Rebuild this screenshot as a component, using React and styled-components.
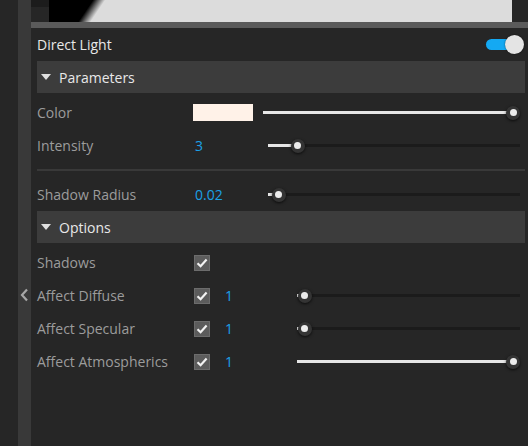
import React from 'react';
import styled, { createGlobalStyle } from 'styled-components';

const GlobalStyle = createGlobalStyle`
  html, body {
    margin: 0;
    padding: 0;
    background: #262626;
    overflow: hidden;
  }
  body {
    font-family: "Open Sans", "Noto Sans", sans-serif;
  }
`;

const Page = styled.div`
  display: grid;
  grid-template-columns: 18px 13px 1fr;
  width: 528px;
  height: 446px;
  background: #262626;
`;

const Gutter = styled.div`
  background: #262626;
`;

const Strip = styled.div`
  background: #393939;
  position: relative;
`;

const Chevron = styled.svg`
  position: absolute;
  left: 2px;
  top: 288px;
`;

const Main = styled.div`
  display: flex;
  flex-direction: column;
  min-width: 0;
`;

const Preview = styled.div`
  display: grid;
  grid-template-columns: 18px 1fr 16px;
  height: 22px;
`;

const PreviewEdge = styled.div`
  background: linear-gradient(#1c1c1c 0 7px, #262626 7px);
`;

const PreviewImage = styled.div`
  background: linear-gradient(124deg, #000 0 9.2%, #dcdcdc 11.8%);
`;

const PreviewRight = styled.div`
  background: #262626;
`;

const GreyBar = styled.div`
  height: 6px;
  background: #5a5a5a;
`;

const Panel = styled.div`
  display: flex;
  flex-direction: column;
  padding: 0 3px 0 6px;
  background: #262626;
`;

const TitleRow = styled.div`
  display: flex;
  align-items: center;
  justify-content: space-between;
  height: 33px;
  color: #e8e8e8;
  font-size: 14px;
`;

const Toggle = styled.div`
  position: relative;
  width: 38px;
  height: 19px;
  margin-right: 1px;
`;

const ToggleTrack = styled.div`
  position: absolute;
  left: 0;
  top: 4px;
  width: 34px;
  height: 11px;
  border-radius: 6px;
  background: #14a9f3;
`;

const ToggleThumb = styled.div`
  position: absolute;
  right: 0;
  top: 0;
  width: 19px;
  height: 19px;
  border-radius: 50%;
  background: #e4e4e4;
  box-shadow: 0 0 2px rgba(0, 0, 0, 0.6);
`;

const SectionHeader = styled.div`
  display: flex;
  align-items: center;
  gap: 8px;
  height: 32px;
  padding-left: 4px;
  background: #3c3c3c;
  color: #e8e8e8;
  font-size: 14px;
  margin-bottom: 3px;
`;

const Row = styled.div`
  display: flex;
  align-items: center;
  height: 33px;
`;

const Label = styled.div`
  width: 156px;
  flex: none;
  color: #9c9c9c;
  font-size: 14px;
  white-space: nowrap;
`;

const Value = styled.div`
  width: ${(p) => p.$w}px;
  flex: none;
  padding-left: 2px;
  box-sizing: border-box;
  color: #1ba1e6;
  font-size: 14px;
`;

const Swatch = styled.div`
  width: 60px;
  height: 17px;
  flex: none;
  margin-right: 10px;
  background: #fff2e8;
`;

const Check = styled.div`
  width: 16px;
  height: 16px;
  flex: none;
  margin-left: 1px;
  box-sizing: border-box;
  border: 1px solid #6c6c6c;
  background: #5c5c5c;
  display: flex;
  align-items: center;
  justify-content: center;
`;

const Spacer = styled.div`
  width: ${(p) => p.$w}px;
  flex: none;
`;

const Track = styled.div`
  position: relative;
  flex: 1;
  height: 3px;
  margin-right: ${(p) => p.$mr}px;
  background: #1b1b1b;
`;

const Fill = styled.div`
  position: absolute;
  left: 0;
  top: 0;
  height: 3px;
  background: #e6e6e6;
`;

const Thumb = styled.div`
  position: absolute;
  top: 50%;
  width: 14px;
  height: 14px;
  margin: -7px 0 0 -7px;
  border-radius: 50%;
  background: #343434;
  box-shadow: 0 1px 3px rgba(0, 0, 0, 0.7);
  display: flex;
  align-items: center;
  justify-content: center;

  &::after {
    content: '';
    width: 7px;
    height: 7px;
    border-radius: 50%;
    background: #ececec;
  }
`;

const Separator = styled.div`
  height: 2px;
  margin: 7px 0 7px;
  background: #393939;
`;

const Triangle = () => (
  <svg width="10" height="7" viewBox="0 0 10 7">
    <path d="M0 0 L10 0 L5 6 Z" fill="#e0e0e0" />
  </svg>
);

const Tick = () => (
  <svg width="12" height="10" viewBox="0 0 12 10">
    <path d="M1.5 5.2 L4.6 8.2 L10.6 1.6" fill="none" stroke="#f2f2f2" strokeWidth="2.2" />
  </svg>
);

const Slider = ({ value, mr = 5 }) => (
  <Track $mr={mr}>
    <Fill style={{ width: `calc(7px + (100% - 14px) * ${value})` }} />
    <Thumb style={{ left: `calc(7px + (100% - 14px) * ${value})` }} />
  </Track>
);

const options = [
  { label: 'Affect Diffuse', value: 0.004 },
  { label: 'Affect Specular', value: 0.004 },
  { label: 'Affect Atmospherics', value: 1 },
];

export default function App() {
  return (
    <Page>
      <GlobalStyle />
      <Gutter />
      <Strip>
        <Chevron width="9" height="14" viewBox="0 0 9 14">
          <path d="M7 1.5 L2 7 L7 12.5" fill="none" stroke="#a6a6a6" strokeWidth="2.2" />
        </Chevron>
      </Strip>
      <Main>
        <Preview>
          <PreviewEdge />
          <PreviewImage />
          <PreviewRight />
        </Preview>
        <GreyBar />
        <Panel>
          <TitleRow>
            <span>Direct Light</span>
            <Toggle>
              <ToggleTrack />
              <ToggleThumb />
            </Toggle>
          </TitleRow>

          <SectionHeader>
            <Triangle />
            Parameters
          </SectionHeader>
          <Row>
            <Label>Color</Label>
            <Swatch />
            <Slider value={1} />
          </Row>
          <Row>
            <Label>Intensity</Label>
            <Value $w={75}>3</Value>
            <Slider value={0.095} />
          </Row>
          <Separator />
          <Row>
            <Label>Shadow Radius</Label>
            <Value $w={75}>0.02</Value>
            <Slider value={0.016} />
          </Row>

          <SectionHeader>
            <Triangle />
            Options
          </SectionHeader>
          <Row>
            <Label>Shadows</Label>
            <Check>
              <Tick />
            </Check>
          </Row>
          {options.map((o) => (
            <Row key={o.label}>
              <Label>{o.label}</Label>
              <Check>
                <Tick />
              </Check>
              <Spacer $w={13} />
              <Value $w={74}>1</Value>
              <Slider value={o.value} />
            </Row>
          ))}
        </Panel>
      </Main>
    </Page>
  );
}
